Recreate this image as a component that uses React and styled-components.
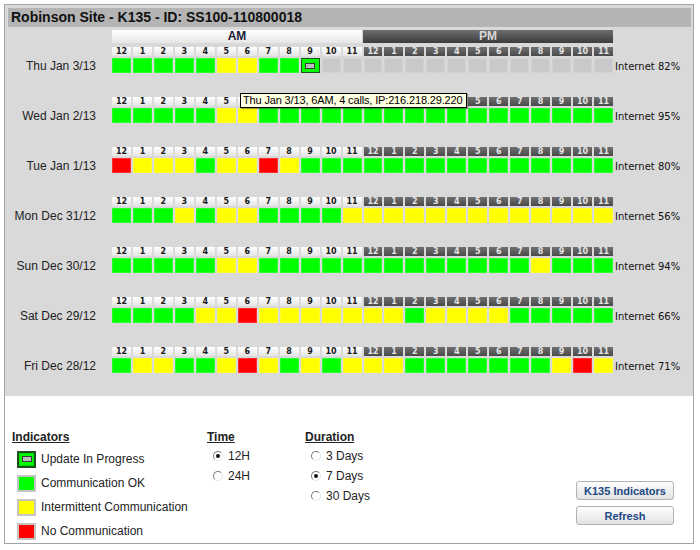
import React from "react";
import styled, { createGlobalStyle, css } from "styled-components";

const GlobalStyle = createGlobalStyle`
  html, body {
    margin: 0;
    padding: 0;
    background: #fff;
  }
  body {
    font-family: "Liberation Sans", Arial, sans-serif;
    font-size: 12px;
    color: #222;
  }
`;

const Frame = styled.div`
  margin: 4px 0 0 4px;
  width: 690px;
  height: 540px;
  box-sizing: border-box;
  border: 1px solid #a4a4a4;
  background: #fff;
  display: flex;
  flex-direction: column;
`;

const Board = styled.div`
  background: #d9d9d9;
  padding: 3px 2px 23px 3px;
`;

const TitleBar = styled.div`
  height: 19px;
  padding-left: 3px;
  background: #b4b4b4;
  color: #111;
  font: bold 14px "Liberation Sans", Arial, sans-serif;
  line-height: 19px;
`;

const PeriodRow = styled.div`
  margin: 3px 0 0 104px;
  width: 501px;
  display: grid;
  grid-template-columns: 1fr 1fr;
  column-gap: 1px;
`;

const PeriodBar = styled.div`
  height: 13px;
  text-align: center;
  font: bold 12px "Liberation Sans", Arial, sans-serif;
  line-height: 13px;
  ${(p) =>
    p.$pm
      ? css`
          background: linear-gradient(#6e6e6e, #3c3c3c);
          color: #d8d8d8;
        `
      : css`
          background: linear-gradient(#ffffff, #e6e6e6);
          color: #1c1c34;
        `}
`;

const Rows = styled.div`
  margin-top: 4px;
  display: flex;
  flex-direction: column;
  gap: 24px;
`;

const Row = styled.div`
  display: flex;
  align-items: flex-end;
`;

const DateLabel = styled.div`
  width: 88px;
  margin-right: 16px;
  height: 15px;
  text-align: right;
  font-size: 12px;
  line-height: 17px;
  color: #222;
`;

const HourGrid = styled.div`
  position: relative;
  width: 501px;
  display: grid;
  grid-template-columns: repeat(24, 1fr);
  grid-template-rows: 9px 15px;
  column-gap: 2px;
  row-gap: 2px;
`;

const HourTag = styled.div`
  height: 9px;
  text-align: center;
  font: bold 8px "DejaVu Sans", Verdana, sans-serif;
  line-height: 9px;
  ${(p) =>
    p.$pm
      ? css`
          background: linear-gradient(#707070, #4a4a4a);
          color: #e4e4e4;
        `
      : css`
          background: linear-gradient(#ffffff, #e4e4e4);
          color: #1a1a1a;
        `}
`;

const cellColors = {
  G: "#00ff00",
  Y: "#ffff00",
  R: "#ff0000",
  N: "#c9c9c9",
  U: "#00ff00",
};

const Cell = styled.div`
  box-sizing: border-box;
  height: 15px;
  background: ${(p) => cellColors[p.$state]};
  border: 1px solid rgba(255, 255, 255, 0.18);
  display: flex;
  align-items: center;
  justify-content: center;
  ${(p) =>
    p.$state === "U" &&
    css`
      border: 1px solid #1f4f1f;
    `}
`;

const Pending = styled.span`
  box-sizing: border-box;
  width: 10px;
  height: 6px;
  background: #bdbdbd;
  border: 1px solid #3a3a3a;
`;

const Internet = styled.div`
  margin-left: 2px;
  height: 15px;
  font: 10px "DejaVu Sans", Verdana, sans-serif;
  line-height: 17px;
  color: #111;
  white-space: nowrap;
`;

const Tooltip = styled.div`
  position: absolute;
  top: 46px;
  left: 128px;
  z-index: 2;
  height: 15px;
  box-sizing: border-box;
  padding: 0 3px 0 2px;
  background: #ffffe1;
  border: 1px solid #000;
  box-shadow: 1px 1px 1px rgba(0, 0, 0, 0.35);
  font: 11px "Liberation Sans", Arial, sans-serif;
  line-height: 13px;
  letter-spacing: -0.15px;
  color: #000;
  white-space: nowrap;
`;

const Controls = styled.div`
  flex: 1;
  display: flex;
  padding: 34px 19px 0 7px;
`;

const Section = styled.div`
  width: ${(p) => p.$width || "auto"};
  flex: ${(p) => (p.$width ? "none" : "1")};
`;

const Heading = styled.div`
  height: 14px;
  line-height: 14px;
  font-weight: bold;
  font-size: 12px;
  text-decoration: underline;
  color: #222;
`;

const LegendList = styled.div`
  margin-top: 3px;
`;

const LegendItem = styled.div`
  height: 24px;
  display: flex;
  align-items: center;
  gap: 5px;
  padding-left: 5px;
`;

const Swatch = styled.span`
  box-sizing: border-box;
  width: 19px;
  height: 17px;
  display: flex;
  align-items: center;
  justify-content: center;
  background: ${(p) => cellColors[p.$state]};
  border: 2px solid #c4c4c4;
  ${(p) =>
    p.$state === "U" &&
    css`
      border: 2px solid #1f4f1f;
      box-shadow: inset 0 0 0 1px #00e000;
    `}
`;

const RadioList = styled.div`
  margin-top: 2px;
`;

const RadioRow = styled.label`
  height: 20px;
  display: flex;
  align-items: center;
  gap: 5px;
  padding-left: 6px;
  font-size: 12px;
  color: #222;
`;

const RadioDot = styled.span`
  box-sizing: border-box;
  width: 10px;
  height: 10px;
  border-radius: 50%;
  border: 1px solid;
  border-color: #7a7a7a #e6e6e6 #e6e6e6 #7a7a7a;
  background: #fff;
  display: flex;
  align-items: center;
  justify-content: center;
  &::after {
    content: "";
    width: 4px;
    height: 4px;
    border-radius: 50%;
    background: ${(p) => (p.$on ? "#111" : "transparent")};
  }
`;

const ButtonColumn = styled.div`
  padding-top: 51px;
  display: flex;
  flex-direction: column;
  gap: 6px;
`;

const Button = styled.button`
  width: 98px;
  height: 19px;
  padding: 0;
  box-sizing: border-box;
  border: 1px solid #b2b2b2;
  border-radius: 3px;
  background: linear-gradient(#fefefe, #e2e2e2);
  color: #1d4a86;
  font: bold 11px "Liberation Sans", Arial, sans-serif;
  cursor: pointer;
`;

const hours = [12, 1, 2, 3, 4, 5, 6, 7, 8, 9, 10, 11];

const days = [
  { date: "Thu Jan 3/13", cells: "GGGGGYYGGUNN" + "NNNNNNNNNNNN", pct: 82 },
  { date: "Wed Jan 2/13", cells: "GGGGGYYGGGGG" + "GGGGGGGGGGGG", pct: 95 },
  { date: "Tue Jan 1/13", cells: "RYYYGYYRYGGG" + "GGGGGGGGGGGG", pct: 80 },
  { date: "Mon Dec 31/12", cells: "GGGYGYYGGGGY" + "YYYYYYYYYYYY", pct: 56 },
  { date: "Sun Dec 30/12", cells: "GGGGGYYGGGGG" + "GGGGGGGGYGGG", pct: 94 },
  { date: "Sat Dec 29/12", cells: "GGGGYYRYYYYY" + "YYGYYYYGGGGG", pct: 66 },
  { date: "Fri Dec 28/12", cells: "GYYGGYRYGYGY" + "YYGGGGGGGYRY", pct: 71 },
];

const legend = [
  { state: "U", text: "Update In Progress" },
  { state: "G", text: "Communication OK" },
  { state: "Y", text: "Intermittent Communication" },
  { state: "R", text: "No Communication" },
];

function DayRow({ day, tooltip }) {
  return (
    <Row>
      <DateLabel>{day.date}</DateLabel>
      <HourGrid>
        {hours.map((h) => (
          <HourTag key={"a" + h}>{h}</HourTag>
        ))}
        {hours.map((h) => (
          <HourTag key={"p" + h} $pm>
            {h}
          </HourTag>
        ))}
        {day.cells.split("").map((s, i) => (
          <Cell key={i} $state={s}>
            {s === "U" && <Pending />}
          </Cell>
        ))}
        {tooltip && <Tooltip>{tooltip}</Tooltip>}
      </HourGrid>
      <Internet>Internet {day.pct}%</Internet>
    </Row>
  );
}

function Radio({ on, children }) {
  return (
    <RadioRow>
      <RadioDot $on={on} />
      {children}
    </RadioRow>
  );
}

export default function App() {
  return (
    <>
      <GlobalStyle />
      <Frame>
        <Board>
          <TitleBar>Robinson Site - K135 - ID: SS100-110800018</TitleBar>
          <PeriodRow>
            <PeriodBar>AM</PeriodBar>
            <PeriodBar $pm>PM</PeriodBar>
          </PeriodRow>
          <Rows>
            {days.map((d, i) => (
              <DayRow
                key={d.date}
                day={d}
                tooltip={i === 0 ? "Thu Jan 3/13, 6AM, 4 calls, IP:216.218.29.220" : null}
              />
            ))}
          </Rows>
        </Board>
        <Controls>
          <Section $width="195px">
            <Heading>Indicators</Heading>
            <LegendList>
              {legend.map((l) => (
                <LegendItem key={l.state}>
                  <Swatch $state={l.state}>{l.state === "U" && <Pending />}</Swatch>
                  {l.text}
                </LegendItem>
              ))}
            </LegendList>
          </Section>
          <Section $width="98px">
            <Heading>Time</Heading>
            <RadioList>
              <Radio on>12H</Radio>
              <Radio>24H</Radio>
            </RadioList>
          </Section>
          <Section>
            <Heading>Duration</Heading>
            <RadioList>
              <Radio>3 Days</Radio>
              <Radio on>7 Days</Radio>
              <Radio>30 Days</Radio>
            </RadioList>
          </Section>
          <ButtonColumn>
            <Button>K135 Indicators</Button>
            <Button>Refresh</Button>
          </ButtonColumn>
        </Controls>
      </Frame>
    </>
  );
}
